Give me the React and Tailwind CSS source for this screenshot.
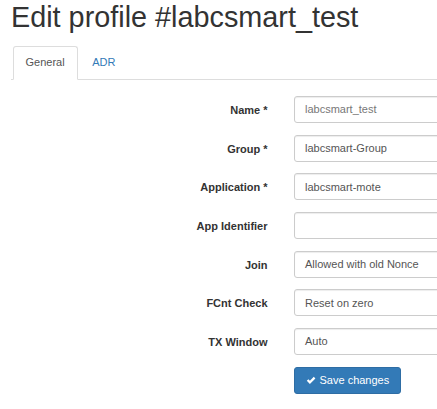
import React from "react";

const rows = [
  { label: "Name *", value: "labcsmart_test", muted: true },
  { label: "Group *", value: "labcsmart-Group" },
  { label: "Application *", value: "labcsmart-mote" },
  { label: "App Identifier", value: "" },
  { label: "Join", value: "Allowed with old Nonce" },
  { label: "FCnt Check", value: "Reset on zero" },
  { label: "TX Window", value: "Auto" },
];

export default function App() {
  return (
    <div
      className="w-[437px] h-[409px] overflow-hidden bg-white pl-[11px] text-[#333]"
      style={{ fontFamily: '"Liberation Sans", Arial, sans-serif' }}
    >
      <h2 className="mt-[1.5px] text-[28.8px] leading-[31.5px] font-normal text-[#333] whitespace-nowrap">
        Edit profile #labcsmart_test
      </h2>
      <div className="mt-[12.8px] flex border-b border-[#ddd] pl-[1.5px]">
        <div className="-mb-px rounded-t-[3px] border border-[#ddd] border-b-white bg-white px-[12px] py-[8px] text-[11px] leading-[15.7px] text-[#555]">
          General
        </div>
        <div className="ml-[1.5px] -mb-px border border-transparent px-[12px] py-[8px] text-[11px] leading-[15.7px] text-[#337ab7]">
          ADR
        </div>
      </div>
      <div className="mt-[16.5px] flex flex-col gap-[11.7px]">
        {rows.map((r) => (
          <div key={r.label} className="flex items-center">
            <div className="w-[256.5px] shrink-0 pt-[2px] text-right text-[11px] font-bold leading-[15px] text-[#333]">
              {r.label}
            </div>
            <div className="ml-[26.5px] flex h-[27px] w-[200px] shrink-0 items-center rounded-[3px] border border-[#ccc] bg-white pl-[10px] text-[11px] shadow-[inset_0_1px_1px_rgba(0,0,0,0.075)]">
              <span className={r.muted ? "text-[#777]" : "text-[#555]"}>{r.value}</span>
            </div>
          </div>
        ))}
        <div className="flex">
          <div className="w-[256.5px] shrink-0" />
          <button className="ml-[26.5px] flex h-[27px] w-[107px] shrink-0 items-center rounded-[3px] border border-[#2e6da4] bg-[#337ab7] pl-[10.5px] text-[11px] text-white">
            <svg width="10" height="9" viewBox="0 0 10 9" className="mr-[4px]">
              <path d="M0.8 4.8 L2.4 3.2 L3.9 4.7 L7.8 0.8 L9.4 2.4 L3.9 7.9 Z" fill="white" />
            </svg>
            Save changes
          </button>
        </div>
      </div>
    </div>
  );
}
